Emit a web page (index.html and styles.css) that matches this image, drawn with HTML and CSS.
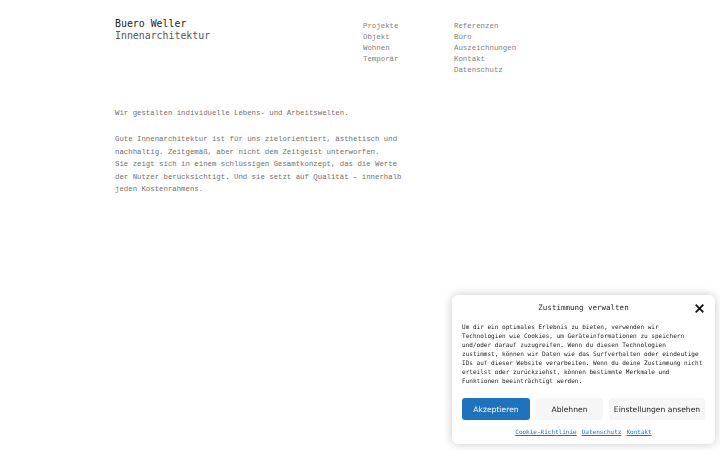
FILE: index.html
```html
<!DOCTYPE html>
<html lang="de">
<head>
<meta charset="utf-8">
<title>Buero Weller Innenarchitektur</title>
<link rel="stylesheet" href="styles.css">
</head>
<body>
<div class="page">
  <header class="header">
    <div class="brand">
      <div class="brand-name">Buero Weller</div>
      <div class="brand-sub">Innenarchitektur</div>
    </div>
    <nav class="nav">
      <ul class="nav-col nav-col-1">
        <li>Projekte</li>
        <li>Objekt</li>
        <li>Wohnen</li>
        <li>Temporär</li>
      </ul>
      <ul class="nav-col">
        <li>Referenzen</li>
        <li>Büro</li>
        <li>Auszeichnungen</li>
        <li>Kontakt</li>
        <li>Datenschutz</li>
      </ul>
    </nav>
  </header>
  <main class="content">
    <p>Wir gestalten individuelle Lebens- und Arbeitswelten.</p>
    <p>Gute Innenarchitektur ist für uns zielorientiert, ästhetisch und<br>nachhaltig. Zeitgemäß, aber nicht dem Zeitgeist unterworfen.<br>Sie zeigt sich in einem schlüssigen Gesamtkonzept, das die Werte<br>der Nutzer berücksichtigt. Und sie setzt auf Qualität – innerhalb<br>jeden Kostenrahmens.</p>
  </main>
</div>
<div class="consent">
  <div class="consent-head">
    <div class="consent-title">Zustimmung verwalten</div>
    <svg class="consent-close" viewBox="0 0 10 10" width="9" height="9"><path d="M1.5 1.5 L8.5 8.5 M8.5 1.5 L1.5 8.5" stroke="#111" stroke-width="2" stroke-linecap="square"/></svg>
  </div>
  <div class="consent-body">Um dir ein optimales Erlebnis zu bieten, verwenden wir Technologien wie Cookies, um Geräteinformationen zu speichern und/oder darauf zuzugreifen. Wenn du diesen Technologien zustimmst, können wir Daten wie das Surfverhalten oder eindeutige IDs auf dieser Website verarbeiten. Wenn du deine Zustimmung nicht erteilst oder zurückziehst, können bestimmte Merkmale und Funktionen beeinträchtigt werden.</div>
  <div class="consent-buttons">
    <button class="btn btn-primary">Akzeptieren</button>
    <button class="btn btn-light btn-deny">Ablehnen</button>
    <button class="btn btn-light btn-prefs">Einstellungen ansehen</button>
  </div>
  <div class="consent-links">
    <a href="#">Cookie-Richtlinie</a>
    <a href="#">Datenschutz</a>
    <a href="#">Kontakt</a>
  </div>
</div>
</body>
</html>
```
FILE: styles.css
```css
html, body {
  margin: 0;
  padding: 0;
  background: #fff;
}
body {
  font-family: "Liberation Mono", "DejaVu Sans Mono", monospace;
  color: #777;
}
.page {
  padding: 18px 0 0 115px;
}
.header {
  display: flex;
  align-items: flex-start;
}
.brand {
  width: 248px;
  font-family: "DejaVu Sans Mono", "Liberation Mono", monospace;
  font-size: 9.9px;
  line-height: 12px;
  color: #222;
}
.brand-sub {
  color: #555;
}
.nav {
  display: flex;
  padding-top: 2.5px;
}
.nav-col {
  list-style: none;
  margin: 0;
  padding: 0;
  font-size: 7.4px;
  line-height: 11px;
  color: #808080;
}
.nav-col-1 {
  width: 91px;
}
.content {
  margin-top: 31.5px;
  font-size: 7.35px;
  line-height: 12.5px;
  color: #707070;
}
.content p {
  margin: 0 0 13.5px 0;
}
.consent {
  position: fixed;
  left: 452px;
  top: 295px;
  width: 263px;
  height: 149px;
  box-sizing: border-box;
  background: #fff;
  border-radius: 6px;
  box-shadow: 0 0 10px rgba(0,0,0,0.22);
  padding: 0 10px;
  color: #222;
}
.consent-head {
  position: relative;
  height: 25px;
  display: flex;
  align-items: center;
  justify-content: center;
}
.consent-title {
  font-family: "DejaVu Sans Mono", monospace;
  font-size: 7.5px;
  color: #222;
}
.consent-close {
  position: absolute;
  right: 1px;
  top: 9px;
}
.consent-body {
  width: 242px;
  font-family: "DejaVu Sans Mono", monospace;
  font-size: 6.05px;
  line-height: 9px;
  color: #222;
  margin-top: 2px;
}
.consent-buttons {
  display: flex;
  gap: 6px;
  margin-top: 13px;
}
.btn {
  height: 22px;
  border: none;
  border-radius: 3px;
  font-family: "DejaVu Sans", "Noto Sans", sans-serif;
  font-size: 7.6px;
  padding: 0;
  cursor: pointer;
}
.btn-primary {
  width: 68px;
  background: #1e73be;
  color: #fff;
}
.btn-light {
  background: #f6f6f6;
  color: #222;
}
.btn-deny {
  width: 67px;
}
.btn-prefs {
  width: 96px;
}
.consent-links {
  display: flex;
  justify-content: center;
  gap: 5px;
  margin-top: 7px;
  font-family: "DejaVu Sans Mono", monospace;
  font-size: 6px;
  line-height: 9px;
}
.consent-links a {
  color: #1e73be;
  text-decoration: underline;
}
```
